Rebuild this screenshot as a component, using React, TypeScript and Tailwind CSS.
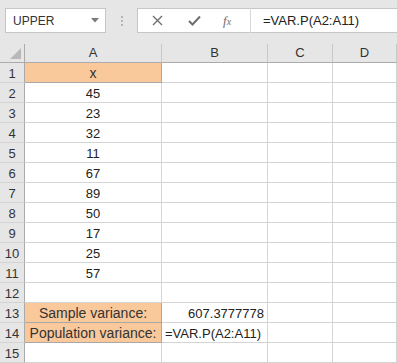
import React from "react";

const font = { fontFamily: '"Liberation Sans", Arial, sans-serif' };

const values: (string | null)[] = ["x", "45", "23", "32", "11", "67", "89", "50", "17", "25", "57", null, "Sample variance:", "Population variance:", null];

export default function App() {
  const rows = Array.from({ length: 15 }, (_, i) => i + 1);
  return (
    <div className="w-[397px] h-[363px] overflow-hidden bg-[#e6e6e6] text-[#222]" style={font}>
      {/* Formula bar */}
      <div className="flex h-[44px] items-start pt-[8px] pl-[5px]">
        <div className="flex h-[25px] w-[101px] items-center justify-between border border-[#c6c6c6] bg-white pl-[7px] pr-[6px]">
          <span className="text-[12px] text-[#333]">UPPER</span>
          <svg width="8" height="5" viewBox="0 0 8 5"><path d="M0 0 L8 0 L4 4.5 Z" fill="#7a7a7a" /></svg>
        </div>
        <div className="flex h-[25px] w-[31px] flex-col items-center justify-center gap-[2px]">
          <div className="h-[2px] w-[2px] bg-[#b5b5b5]" />
          <div className="h-[2px] w-[2px] bg-[#b5b5b5]" />
          <div className="h-[2px] w-[2px] bg-[#b5b5b5]" />
        </div>
        <div className="flex h-[25px] flex-1 items-center border-y border-l border-[#c6c6c6] bg-white">
          <div className="flex w-[112px] items-center">
            <svg className="ml-[14px]" width="11" height="11" viewBox="0 0 11 11"><path d="M1 1 L10 10 M10 1 L1 10" stroke="#6e6e6e" strokeWidth="1.4" /></svg>
            <svg className="ml-[25px]" width="13" height="11" viewBox="0 0 13 11"><path d="M1 6 L4.5 9.5 L12 1.5" stroke="#6e6e6e" strokeWidth="2" fill="none" /></svg>
            <span className="ml-[22px] text-[13px] italic text-[#6e6e6e]" style={{ fontFamily: '"Liberation Serif", serif' }}>
              f<span className="text-[10px]">x</span>
            </span>
          </div>
          <div className="h-[25px] w-px bg-[#d8d8d8]" />
          <span className="ml-[12px] text-[13px] text-[#222]">=VAR.P(A2:A11)</span>
        </div>
      </div>
      {/* Grid */}
      <div className="grid grid-cols-[25px_137px_106px_65px_64px] grid-rows-[19px_repeat(15,20px)] bg-white">
        <div className="relative border-r border-b border-[#ababab] bg-[#e6e6e6]">
          <svg className="absolute right-[3px] bottom-[3px]" width="11" height="11" viewBox="0 0 11 11"><path d="M11 0 L11 11 L0 11 Z" fill="#b8b8b8" /></svg>
        </div>
        {["A", "B", "C", "D"].map((c) => (
          <div key={c} className="flex items-center justify-center border-r border-b border-r-[#c8c8c8] border-b-[#ababab] bg-[#e6e6e6] text-[13px] text-[#333]">
            {c}
          </div>
        ))}
        {rows.map((r) => {
          const v = values[r - 1];
          const orange = r === 1 || r === 13 || r === 14;
          return (
            <React.Fragment key={r}>
              <div className="flex items-center justify-center border-r border-b border-r-[#ababab] border-b-[#d4d4d4] bg-[#e6e6e6] pt-[2px] text-[13px] text-[#333]">
                {r}
              </div>
              <div
                className={
                  "flex items-center justify-center border-r border-b pt-[2px] " +
                  (orange ? "bg-[#f9c99c] border-[#a8a8a8] text-[#333] text-[14px]" : "border-[#d4d4d4] text-[13px]")
                }
              >
                {v}
              </div>
              <div className="flex items-center border-r border-b border-[#d4d4d4] pt-[2px] text-[13px]">
                {r === 13 && <span className="ml-auto pr-[3px]">607.3777778</span>}
                {r === 14 && <span className="pl-[3px]">=VAR.P(A2:A11)</span>}
              </div>
              <div className="border-r border-b border-[#d4d4d4]" />
              <div className="border-r border-b border-[#d4d4d4]" />
            </React.Fragment>
          );
        })}
      </div>
    </div>
  );
}
